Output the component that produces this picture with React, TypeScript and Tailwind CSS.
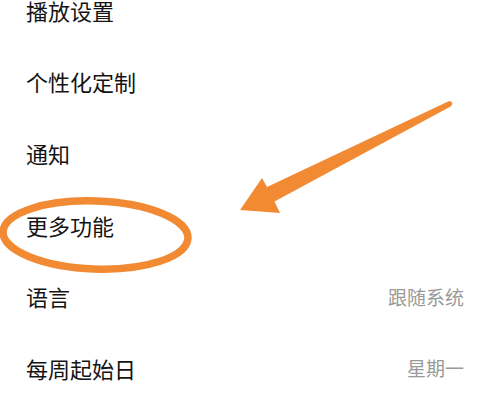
import React from "react";

const rows: { label: string; value?: string }[] = [
  { label: "播放设置" },
  { label: "个性化定制" },
  { label: "通知" },
  { label: "更多功能" },
  { label: "语言", value: "跟随系统" },
  { label: "每周起始日", value: "星期一" },
];

export default function App() {
  return (
    <div
      className="relative w-[490px] h-[405px] overflow-hidden bg-white"
      style={{ fontFamily: '"Noto Sans CJK SC", "Noto Sans", sans-serif' }}
    >
      <div className="flex flex-col mt-[-26px]">
        {rows.map((r) => (
          <div
            key={r.label}
            className="flex h-[71.6px] shrink-0 items-center justify-between pl-[26px] pr-[26px]"
          >
            <span className="text-[22px] leading-none text-[#141414]">{r.label}</span>
            {r.value && (
              <span className="text-[19px] leading-none text-[#999999]">{r.value}</span>
            )}
          </div>
        ))}
      </div>
      <svg
        className="absolute left-0 top-0 pointer-events-none"
        width={490}
        height={405}
        viewBox="0 0 490 405"
      >
        <ellipse
          cx={95.5}
          cy={235}
          rx={92.5}
          ry={34}
          fill="none"
          stroke="#F28A33"
          strokeWidth={7.5}
          transform="rotate(2 95.5 235)"
        />
        <path
          d="M240 210 L262 178 L267 187 L448.6 101.3 Q452 100.5 452.2 103.5 Q452 105.8 450.6 106.5 L274.5 201.5 L280 213 Z"
          fill="#F28A33"
          strokeLinejoin="round"
        />
      </svg>
    </div>
  );
}
